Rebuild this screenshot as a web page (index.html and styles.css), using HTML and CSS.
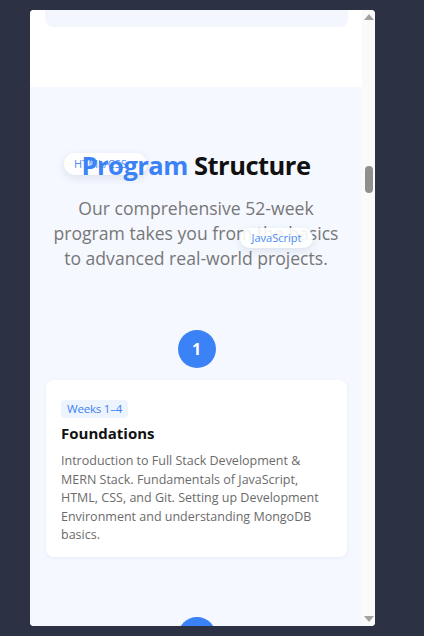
FILE: index.html
```html
<!DOCTYPE html>
<html>
<head>
<meta charset="utf-8">
<link rel="stylesheet" href="styles.css">
</head>
<body>
<div class="frame">
  <div class="viewport">
    <section class="prev">
      <div class="prev-card"></div>
    </section>
    <section class="structure">
      <span class="float-tag tag-html">HTML/CSS</span>
      <span class="float-tag tag-js">JavaScript</span>
      <h2 class="title"><span class="accent">Program</span> Structure</h2>
      <p class="lead">Our comprehensive 52-week program takes you from the basics to advanced real-world projects.</p>
      <div class="timeline">
        <div class="step-num">1</div>
        <div class="card">
          <span class="weeks">Weeks 1–4</span>
          <h3 class="card-title">Foundations</h3>
          <p class="card-text">Introduction to Full Stack Development &amp; MERN Stack. Fundamentals of JavaScript, HTML, CSS, and Git. Setting up Development Environment and understanding MongoDB basics.</p>
        </div>
        <div class="step-num">2</div>
      </div>
    </section>
  </div>
  <div class="scrollbar">
    <div class="arrow up"></div>
    <div class="track"><div class="thumb"></div></div>
    <div class="arrow down"></div>
  </div>
</div>
</body>
</html>
```
FILE: styles.css
```css
html, body {
  margin: 0;
  padding: 0;
}
body {
  background: #2c3144;
  padding: 10px 0 0 30px;
  height: 636px;
  box-sizing: border-box;
  overflow: hidden;
  font-family: "Open Sans", "Noto Sans", sans-serif;
}
.frame {
  width: 345px;
  height: 616px;
  background: #ffffff;
  border-radius: 4px;
  display: flex;
  overflow: hidden;
}
.viewport {
  flex: 1;
  overflow: hidden;
}
.prev {
  background: #ffffff;
  height: 77px;
  padding: 0 14px 0 15px;
}
.prev-card {
  height: 17px;
  background: #f3f7fd;
  border-radius: 0 0 8px 8px;
}
.structure {
  background: #f5f8ff;
  position: relative;
  padding: 60px 0 0;
  text-align: center;
}
.float-tag {
  position: absolute;
  background: #ffffff;
  color: #3b82f6;
  font-size: 11px;
  border-radius: 12px;
  box-shadow: 0 3px 8px rgba(30, 50, 90, 0.12);
  line-height: 20px;
  padding: 0 10px;
  opacity: 0.9;
}
.tag-html {
  left: 34px;
  top: 66px;
  width: 63px;
  height: 22px;
  line-height: 22px;
  text-align: left;
}
.tag-js {
  left: 210px;
  top: 141px;
  width: 53px;
}
.title {
  position: relative;
  margin: 0;
  font-size: 25.5px;
  font-weight: 700;
  color: #111111;
  line-height: 36px;
  letter-spacing: -0.5px;
}
.accent {
  color: #3b82f6;
}
.lead {
  margin: 13px auto 0;
  width: 300px;
  font-size: 17.6px;
  line-height: 25px;
  color: #777777;
  font-weight: 400;
}
.timeline {
  padding: 59px 15px 0 16px;
  display: flex;
  flex-direction: column;
  align-items: center;
}
.step-num {
  width: 38px;
  height: 38px;
  border-radius: 50%;
  background: #3b82f6;
  color: #ffffff;
  font-weight: 700;
  font-size: 16px;
  line-height: 38px;
  text-align: center;
  flex-shrink: 0;
}
.card {
  align-self: stretch;
  margin: 12px 0 60px;
  background: #ffffff;
  border-radius: 8px;
  box-shadow: 0 1px 4px rgba(30, 50, 90, 0.06);
  padding: 16px 15px 12px;
  text-align: left;
}
.weeks {
  display: inline-block;
  background: #eef4fe;
  color: #3b82f6;
  font-size: 11.5px;
  line-height: 18px;
  padding: 0 6px;
  border-radius: 4px;
  letter-spacing: -0.2px;
}
.card-title {
  margin: 5px 0 0;
  font-size: 15px;
  font-weight: 700;
  color: #111111;
  line-height: 20px;
}
.card-text {
  margin: 9px 0 0;
  font-size: 12.5px;
  line-height: 18.6px;
  color: #6b6b6b;
}
.scrollbar {
  width: 13px;
  background: #fafafa;
  display: flex;
  flex-direction: column;
  align-items: center;
}
.arrow {
  width: 0;
  height: 0;
  border-left: 5px solid transparent;
  border-right: 5px solid transparent;
}
.arrow.up {
  margin-top: 4px;
  border-bottom: 6px solid #a3a3a3;
}
.arrow.down {
  margin-bottom: 4px;
  border-top: 6px solid #a3a3a3;
}
.track {
  flex: 1;
  align-self: stretch;
  display: flex;
  justify-content: center;
}
.thumb {
  margin-top: 146px;
  width: 8px;
  height: 27px;
  border-radius: 4px;
  background: #8f8f8f;
}
```
